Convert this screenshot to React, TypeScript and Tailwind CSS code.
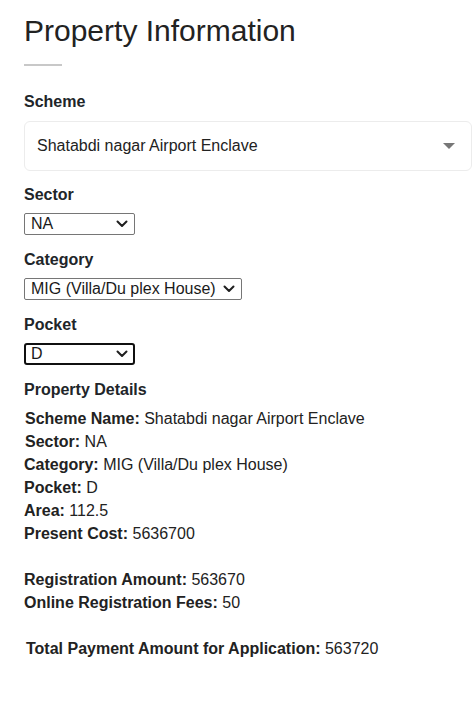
import React from 'react';

const Chevron = () => (
    <svg width="12" height="8" viewBox="0 0 12 8" fill="none">
        <path d="M1.5 1.5 L6 6 L10.5 1.5" stroke="#1f1f1f" strokeWidth="2" strokeLinecap="round" strokeLinejoin="round" />
    </svg>
);

const FakeSelect = ({ value, width, focused }: { value: string; width: string; focused?: boolean }) => (
    <div
        className={`flex h-[22px] items-center justify-between ${width} ${
            focused ? 'rounded-[3px] border-2 border-[#101010] pl-[5px] pr-[5px]' : 'rounded-[2px] border border-[#767676] pl-[6px] pr-[6px]'
        }`}
    >
        <span className="text-[16px] leading-none text-[#1a1a1a]">{value}</span>
        <Chevron />
    </div>
);

const Row = ({ label, value, indent }: { label: string; value: string; indent?: boolean }) => (
    <div className={indent ? 'pl-[1px]' : ''}>
        <span className="font-bold">{label}:</span> {value}
    </div>
);

export default function App() {
    return (
        <div className="min-h-[712px] w-[472px] overflow-hidden bg-white pl-[24px] text-[#212529]" style={{ fontFamily: '"Liberation Sans", Arial, sans-serif' }}>
            <h1 className="pt-[12px] text-[30px] font-normal leading-[38px] text-[#222]">Property Information</h1>
            <div className="mt-[14px] h-[2px] w-[38px] bg-[#c8c8c8]" />

            {/* Scheme */}
            <div className="mt-[26px] text-[16px] font-bold leading-[20px]">Scheme</div>
            <div className="mt-[9px] flex h-[50px] w-[448px] items-center justify-between rounded-[6px] border border-[#ececec] pl-[12px] pr-[16px]">
                <span className="text-[16px] text-[#222]">Shatabdi nagar Airport Enclave</span>
                <svg width="12" height="6" viewBox="0 0 12 6">
                    <path d="M0 0 L12 0 L6 6 Z" fill="#777" />
                </svg>
            </div>

            {/* Sector */}
            <div className="mt-[14px] text-[16px] font-bold leading-[20px]">Sector</div>
            <div className="mt-[8px]">
                <FakeSelect value="NA" width="w-[111px]" />
            </div>

            {/* Category */}
            <div className="mt-[15px] text-[16px] font-bold leading-[20px]">Category</div>
            <div className="mt-[8px]">
                <FakeSelect value="MIG (Villa/Du plex House)" width="w-[218px]" />
            </div>

            {/* Pocket */}
            <div className="mt-[15px] text-[16px] font-bold leading-[20px]">Pocket</div>
            <div className="mt-[8px]">
                <FakeSelect value="D" width="w-[111px]" focused />
            </div>

            {/* Property Details */}
            <div className="mt-[15px] text-[16px] font-bold leading-[20px]">Property Details</div>
            <div className="mt-[7px] text-[16px] leading-[23px] text-[#222]">
                <Row label="Scheme Name" value="Shatabdi nagar Airport Enclave" indent />
                <Row label="Sector" value="NA" indent />
                <Row label="Category" value="MIG (Villa/Du plex House)" />
                <Row label="Pocket" value="D" />
                <Row label="Area" value="112.5" />
                <Row label="Present Cost" value="5636700" />
                <div className="h-[23px]" />
                <Row label="Registration Amount" value="563670" />
                <Row label="Online Registration Fees" value="50" />
                <div className="h-[23px]" />
                <div className="pl-[2px]">
                    <span className="font-bold">Total Payment Amount for Application:</span> 563720
                </div>
            </div>
        </div>
    );
}
